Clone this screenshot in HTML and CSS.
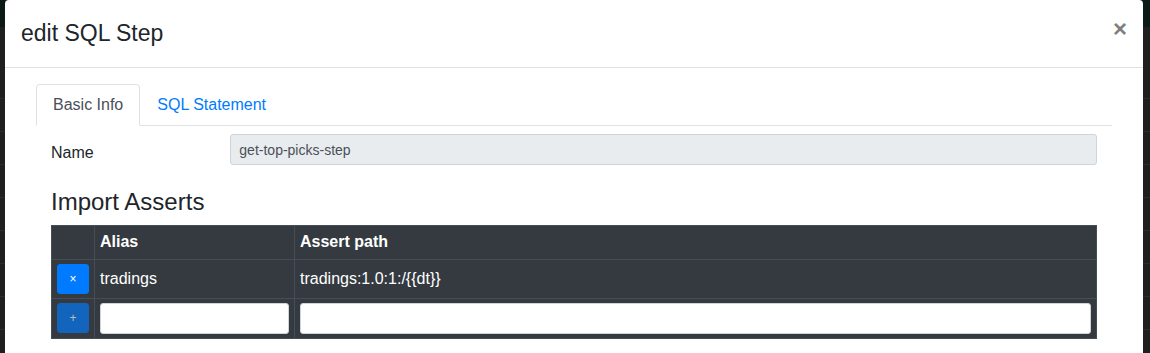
FILE: index.html
```html
<!DOCTYPE html>
<html lang="en">
<head>
<meta charset="utf-8">
<title>edit SQL Step</title>
<link rel="stylesheet" href="styles.css">
</head>
<body>
<div class="screen">
  <div class="backdrop backdrop-left"></div>
  <div class="modal">
    <div class="modal-header">
      <h4 class="modal-title">edit SQL Step</h4>
      <button class="close" type="button">×</button>
    </div>
    <div class="modal-body">
      <div class="container">
        <ul class="nav-tabs">
          <li class="nav-item"><a class="nav-link active">Basic Info</a></li>
          <li class="nav-item"><a class="nav-link">SQL Statement</a></li>
        </ul>
        <div class="tab-pane">
          <div class="form-row">
            <label class="col-label">Name</label>
            <div class="col-field">
              <input class="form-control readonly" type="text" value="get-top-picks-step" readonly>
            </div>
          </div>
          <div class="section">
            <h4 class="section-title">Import Asserts</h4>
            <table class="table-dark">
              <thead>
                <tr>
                  <th class="col-btn"></th>
                  <th class="col-alias">Alias</th>
                  <th class="col-path">Assert path</th>
                </tr>
              </thead>
              <tbody>
                <tr>
                  <td><button class="btn btn-remove" type="button">×</button></td>
                  <td>tradings</td>
                  <td>tradings:1.0:1:/{{dt}}</td>
                </tr>
                <tr>
                  <td><button class="btn btn-add" type="button" disabled>+</button></td>
                  <td><input class="form-control" type="text"></td>
                  <td><input class="form-control" type="text"></td>
                </tr>
              </tbody>
            </table>
          </div>
        </div>
      </div>
    </div>
  </div>
  <div class="backdrop backdrop-right"></div>
</div>
</body>
</html>
```

FILE: styles.css
```css
* { box-sizing: border-box; }

html, body {
  margin: 0;
  padding: 0;
  background: #1f1f1f;
}

body {
  font-family: "Liberation Sans", Arial, sans-serif;
  font-size: 16px;
  line-height: 1.5;
  color: #212529;
}

.screen {
  display: flex;
  width: 1150px;
  height: 353px;
  overflow: hidden;
}

.backdrop {
  flex: 0 0 auto;
  height: 353px;
  background:
    linear-gradient(#0b1917, #0b1917) no-repeat 0 0 / 100% 27px,
    linear-gradient(#1f1f1f, #1f1f1f) no-repeat 0 27px / 100% 68px,
    repeating-linear-gradient(to bottom, #1f1f1f 0 32px, #2c2c2c 32px 33px);
}

.backdrop-left { width: 5px; }
.backdrop-right { width: 7px; }

.modal {
  flex: 1 1 auto;
  background: #fff;
  border-radius: 4px 4px 0 0;
  height: 353px;
  overflow: hidden;
}

.modal-header {
  display: flex;
  align-items: flex-start;
  padding: 16px;
  border-bottom: 1px solid #dee2e6;
}

.modal-title {
  margin: 0;
  font-size: 23px;
  line-height: 35px;
  font-weight: 500;
  color: #212529;
}

.close {
  margin: -16px -16px -16px auto;
  padding: 17px 16px 16px;
  background: transparent;
  border: 0;
  font-family: "Liberation Sans", Arial, sans-serif;
  font-size: 24px;
  font-weight: 700;
  line-height: 1;
  color: #000;
  opacity: 0.5;
  text-shadow: 0 1px 0 #fff;
}

.modal-body {
  padding: 16px;
}

.container {
  padding: 0 15px;
}

.nav-tabs {
  display: flex;
  list-style: none;
  margin: 0;
  padding: 0;
  border-bottom: 1px solid #dee2e6;
}

.nav-item {
  margin-bottom: -1px;
}

.nav-link {
  display: block;
  padding: 8px 16px;
  border: 1px solid transparent;
  border-radius: 4px 4px 0 0;
  color: #007bff;
  line-height: 24px;
}

.nav-link.active {
  color: #495057;
  background: #fff;
  border-color: #dee2e6 #dee2e6 #fff;
}

.tab-pane {
  padding-top: 8px;
}

.form-row {
  display: flex;
  margin-bottom: 16px;
}

.col-label {
  flex: 0 0 16.6667%;
  padding: 7px 15px;
  line-height: 24px;
}

.col-field {
  flex: 1 1 auto;
  padding: 0 15px;
}

.form-control {
  display: block;
  width: 100%;
  height: 31px;
  padding: 4px 8px;
  font-family: "Liberation Sans", Arial, sans-serif;
  font-size: 14px;
  line-height: 21px;
  color: #495057;
  background: #fff;
  border: 1px solid #ced4da;
  border-radius: 3px;
}

.form-control.readonly {
  background: #e9ecef;
}

.section {
  padding: 0 15px;
}

.section-title {
  margin: 0 0 8px;
  font-size: 24px;
  line-height: 1.2;
  font-weight: 500;
  color: #212529;
}

.table-dark {
  width: 100%;
  border-collapse: collapse;
  table-layout: fixed;
  background: #343a40;
  color: #fff;
}

.table-dark th,
.table-dark td {
  border: 1px solid #454d55;
  padding: 4.5px 5px;
  text-align: left;
  vertical-align: middle;
  line-height: 24px;
}

.table-dark td {
  padding: 4px 5px;
}

.table-dark th {
  font-weight: 700;
}

.col-btn { width: 43px; }
.col-alias { width: 200px; }

.btn {
  display: block;
  width: 32px;
  height: 30px;
  padding: 0;
  border: 1px solid #007bff;
  border-radius: 3px;
  background: #007bff;
  color: #fff;
  font-family: "Liberation Sans", Arial, sans-serif;
  font-size: 12px;
  line-height: 28px;
  text-align: center;
}

.btn-add {
  opacity: 0.65;
}

.table-dark td .form-control {
  height: 31px;
}
```
